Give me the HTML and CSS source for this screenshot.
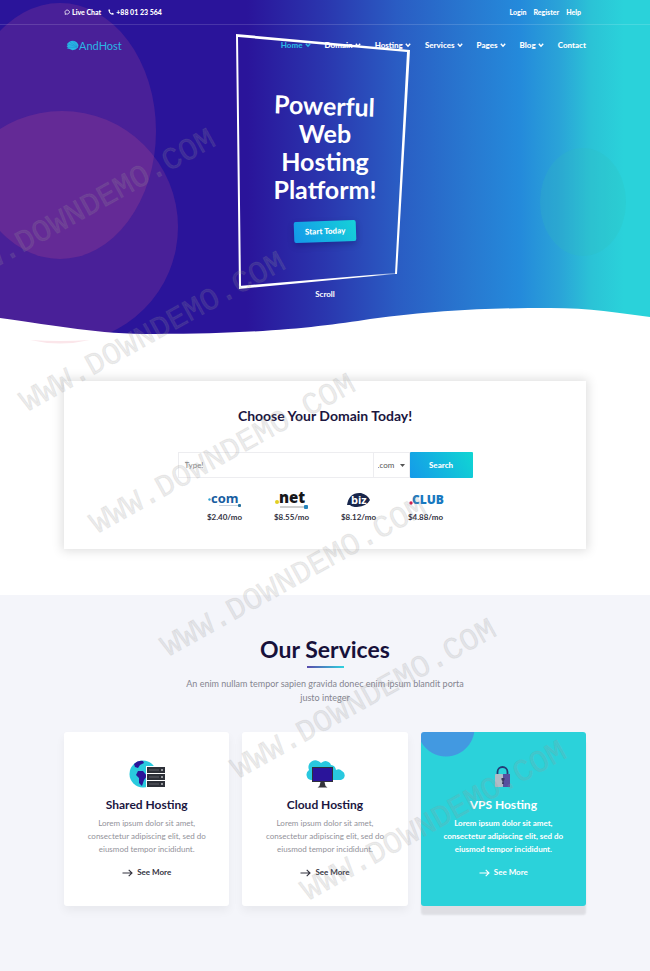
FILE: index.html
```
<!DOCTYPE html>
<html lang="en">
<head>
<meta charset="utf-8">
<meta name="viewport" content="width=device-width, initial-scale=1">
<title>AndHost</title>
<link rel="stylesheet" href="styles.css">
</head>
<body>
<svg class="defs" width="0" height="0" aria-hidden="true">
  <symbol id="arrow" viewBox="0 0 11 8"><path d="M0.5 4h9.5M6.7 0.8 10 4 6.7 7.2" fill="none" stroke="currentColor" stroke-width="1.1"/></symbol>
  <symbol id="chev" viewBox="0 0 6 6"><path d="M0.8 1.7 3 4.1 5.2 1.7" fill="none" stroke="currentColor" stroke-width="1.4"/></symbol>
</svg>

<header class="hero">
  <svg class="shapes" viewBox="0 0 650 350" preserveAspectRatio="none" aria-hidden="true">
    <ellipse cx="60" cy="131" rx="96" ry="128" fill="#ff6490" fill-opacity=".15"/>
    <circle cx="62" cy="227" r="116" fill="#ff6490" fill-opacity=".15"/>
    <ellipse cx="583" cy="202" rx="43" ry="54" fill="#34bdb8" fill-opacity=".2"/>
    <path class="wave" d="M0 318C60 326 95 334 155 334C260 334 320 327 370 319C440 310 490 308 550 308C590 308 620 313 650 317V350H0Z"/>
    <path d="M30 340Q60 342 90 340Q60 347 30 340Z" fill="#fbe6ea"/>
  </svg>

  <div class="topbar">
    <div class="contact">
      <a href="#chat"><svg width="6" height="6" viewBox="0 0 6 6" aria-hidden="true"><path d="M1 5.3 1.4 4.2A2.2 2 0 1 1 2.6 5Z" fill="none" stroke="currentColor" stroke-width=".8"/></svg>Live Chat</a>
      <a href="tel:+880123564"><svg width="6" height="6" viewBox="0 0 6 6" aria-hidden="true"><path d="M.3.7 1.5.2 2.3 1.9 1.6 2.5Q2.3 3.8 3.6 4.4L4.2 3.7 5.8 4.5 5.4 5.8Q1 5.6.3.7Z" fill="currentColor"/></svg>+88 01 23 564</a>
    </div>
    <div class="account"><a href="#login">Login</a><a href="#register">Register</a><a href="#help">Help</a></div>
  </div>

  <div class="navbar">
    <a class="logo" href="#home"><svg width="13" height="11" viewBox="0 0 13 11" aria-hidden="true"><path d="M1 4 3 2 5 1 7 .7 9 1.2 11 2.5 12.5 5 12 7.5 9.5 9.5 6.5 10.2 3.5 9 .7 8.2 2 7.5.5 6 1.8 5.6Z" fill="#29b6e3"/><path d="M2 4 11 7M4 2.2 11 6.8M7 1.2 11.4 6.4M2 7.3 11 7.4" stroke="#1f7fd0" stroke-width=".4" fill="none"/></svg>AndHost</a>
    <nav>
      <a class="active" href="#home">Home<svg><use href="#chev"/></svg></a>
      <a href="#domain">Domain<svg><use href="#chev"/></svg></a>
      <a href="#hosting">Hosting<svg><use href="#chev"/></svg></a>
      <a href="#services">Services<svg><use href="#chev"/></svg></a>
      <a href="#pages">Pages<svg><use href="#chev"/></svg></a>
      <a href="#blog">Blog<svg><use href="#chev"/></svg></a>
      <a href="#contact">Contact</a>
    </nav>
  </div>

  <div class="banner">
    <svg class="frame" viewBox="0 0 176 258" aria-hidden="true">
      <defs><linearGradient id="fade"><stop offset=".85" stop-color="#fff"/><stop offset="1" stop-color="#fff" stop-opacity=".35"/></linearGradient></defs>
      <path d="M1 1 175 17 162 241 160 241 172 19 3 4 6 253 4 256Z" fill="#fff"/>
      <path d="M4 253 160 240 160 241 4 256Z" fill="url(#fade)"/>
    </svg>
    <h1><span class="tilt">Powerful</span><span>Web</span><span>Hosting</span><span>Platform!</span></h1>
    <a class="start" href="#start">Start Today</a>
    <a class="scroll" href="#domain">Scroll</a>
  </div>
</header>

<main>
  <section class="domain" id="domain">
    <h2>Choose Your Domain Today!</h2>
    <form>
      <input type="text" aria-label="Domain name" placeholder="Type!">
      <label class="tld"><select aria-label="Extension"><option>.com</option><option>.net</option></select><svg width="5" height="3" viewBox="0 0 5 3" aria-hidden="true"><path d="M0 0h5L2.500 3Z" fill="#555"/></svg></label>
      <button type="button">Search</button>
    </form>
    <ul class="prices">
      <li><svg viewBox="0 0 36 20" role="img" aria-label=".com"><circle cx="2.500" cy="9.500" r="1.200" fill="#35a3d4"/><text x="4" y="13" class="mark com">com</text><path d="M12 15.500H32" stroke="#b5c5d5" stroke-width=".8"/><rect x="31" y="14" width="3" height="3" rx="1" fill="#26729f"/></svg>$2.40/mo</li>
      <li><svg viewBox="0 0 36 20" role="img" aria-label=".net"><circle cx="3" cy="12" r="2" fill="#e2cf22"/><text x="5" y="13" class="mark net">net</text><path d="M6 17H31" stroke="#777" stroke-width=".7"/><rect x="30" y="15" width="4" height="4" rx="1" fill="#2685bd"/></svg>$8.55/mo</li>
      <li><svg viewBox="0 0 36 20" role="img" aria-label=".biz"><path d="M6 15Q8 2 20 3Q27 5 29 10Q26 16 16 17Q11 17 9 15Z" fill="#18264b"/><text x="10" y="14" class="mark biz">biz</text></svg>$8.12/mo</li>
      <li><svg viewBox="0 0 36 20" role="img" aria-label=".club"><circle cx="3" cy="13" r="1.700" fill="#d1224f"/><text x="4" y="14" class="mark club">CLUB</text></svg>$4.88/mo</li>
    </ul>
  </section>

  <section class="services" id="services">
    <h2>Our Services</h2>
    <p class="lead">An enim nullam tempor sapien gravida donec enim ipsum blandit porta justo integer</p>
    <div class="cards">
      <article>
        <svg class="icon" viewBox="0 0 36 28" aria-hidden="true"><circle cx="14" cy="14" r="13.500" fill="#29cade"/><path d="M5 4Q9 0 14 1L15 3 11 5 9 8 6 7ZM9 11 14 11 18 16 15 20 13 26 10 23 10 18 7 15Z" fill="#2a1599"/><path d="M17 6h19v21H17Z" fill="#fff"/><g fill="#2d3038"><rect x="18" y="7" width="18" height="6"/><rect x="18" y="14" width="18" height="6"/><rect x="18" y="21" width="18" height="6"/></g><path d="M20 10h10M20 17h10M20 24h10" stroke="#757780" stroke-width=".7"/><path d="M32 10h2M32 17h2M32 24h2" stroke="#fff" stroke-width="1.200"/></svg>
        <h3>Shared Hosting</h3>
        <p>Lorem ipsum dolor sit amet, consectetur adipiscing elit, sed do eiusmod tempor incididunt.</p>
        <a href="#shared"><svg><use href="#arrow"/></svg>See More</a>
      </article>
      <article>
        <svg class="icon wide" viewBox="0 0 40 28" aria-hidden="true"><path d="M6 20A5.500 5.500 0 0 1 4 10A7 7 0 0 1 16 3A6 6 0 0 1 26 5A6 6 0 0 1 31 10A5 5 0 0 1 37 11A4.800 4.800 0 0 1 36 20Z" fill="#29c8df"/><rect x="7" y="7" width="21" height="15" fill="#2f303b"/><rect x="8" y="8" width="19" height="13" fill="#2a149a"/><path d="M15.500 22h4l1 4 2 1.500H12.500l2-1.500Z" fill="#34343b"/></svg>
        <h3>Cloud Hosting</h3>
        <p>Lorem ipsum dolor sit amet, consectetur adipiscing elit, sed do eiusmod tempor incididunt.</p>
        <a href="#cloud"><svg><use href="#arrow"/></svg>See More</a>
      </article>
      <article class="featured">
        <svg class="icon" viewBox="0 0 36 28" aria-hidden="true"><path d="M12.500 15V12A5 5 0 0 1 22.500 12V15" fill="none" stroke="#243c75" stroke-width="1.800"/><rect x="10" y="14" width="8" height="13" rx="1" fill="#b1bcc6"/><path d="M18 14h7v13h-7Z" fill="#574f9f"/><path d="M16.500 18h3v2l-1 1 .5 3h-2l.5-3-1-1Z" fill="#39365f"/></svg>
        <h3>VPS Hosting</h3>
        <p>Lorem ipsum dolor sit amet, consectetur adipiscing elit, sed do eiusmod tempor incididunt.</p>
        <a href="#vps"><svg><use href="#arrow"/></svg>See More</a>
      </article>
    </div>
  </section>
</main>

<svg class="watermark" aria-hidden="true">
  <text transform="translate(-43 289) rotate(-29)">WWW.DOWNDEMO.COM</text>
  <text transform="translate(27 412) rotate(-29)">WWW.DOWNDEMO.COM</text>
  <text transform="translate(97 534) rotate(-29)">WWW.DOWNDEMO.COM</text>
  <text transform="translate(168 657) rotate(-29)">WWW.DOWNDEMO.COM</text>
  <text transform="translate(238 779) rotate(-29)">WWW.DOWNDEMO.COM</text>
  <text transform="translate(308 901) rotate(-29)">WWW.DOWNDEMO.COM</text>
</svg>
</body>
</html>
```
FILE: styles.css
```
* { box-sizing: border-box; }

body {
  position: relative;
  margin: 0;
  font-family: Lato, "Liberation Sans", sans-serif;
  font-size: 8px;
  color: #33333f;
  background: #fff;
}

h1, h2, h3, p, ul { margin: 0; padding: 0; }
a { color: inherit; text-decoration: none; }
.defs { position: absolute; }

/* Hero */
.hero {
  position: relative;
  height: 350px;
  color: #fff;
  background: linear-gradient(90deg, #2a149a 0 38%, #2a36ae 50%, #2a5cc3 61%, #2878d0 72%, #248adb 80%, #2aa3d8 86%, #2bc3d6 91%, #2ad2da 96%);
}
.shapes { position: absolute; inset: 0; width: 100%; height: 100%; }
.wave { fill: #fff; }

.topbar {
  position: relative;
  display: flex;
  justify-content: space-between;
  align-items: center;
  height: 25px;
  padding: 0 69px 0 64px;
  border-bottom: 1px solid rgba(255, 255, 255, .14);
  font-size: 7px;
  font-weight: 900;
}
.contact, .account { display: flex; gap: 7px; }
.contact a { display: flex; align-items: center; gap: 2px; }

.navbar {
  position: relative;
  display: flex;
  justify-content: space-between;
  align-items: center;
  height: 40px;
  padding: 0 64px 0 66px;
}
.logo { display: flex; align-items: center; font-size: 11px; color: #2bb6e4; }
nav { display: flex; gap: 14px; font-weight: 900; }
nav a { display: flex; align-items: center; gap: 2px; }
nav svg { width: 6px; height: 6px; }
nav .active { color: #2ab5e2; }

.banner {
  position: relative;
  display: flex;
  flex-direction: column;
  align-items: center;
  padding-top: 26px;
}
.frame {
  position: absolute;
  top: -32px;
  left: 50%;
  width: 176px;
  margin-left: -90px;
}
h1 { position: relative; font-size: 25px; line-height: 28px; text-align: center; }
h1 span { display: block; }
h1 .tilt { transform: rotate(2deg); }
.start {
  position: relative;
  margin-top: 18px;
  padding: 0 11px;
  border-radius: 2px;
  font-weight: 900;
  line-height: 21px;
  background: linear-gradient(60deg, #1397ea, #16d2d8);
  box-shadow: 0 3px 6px rgba(0, 0, 60, .25);
  transform: rotate(-2deg);
}
.scroll { margin-top: 46px; font-weight: 700; line-height: 12px; }

/* Domain search */
.domain {
  margin: 31px 64px 46px;
  height: 168px;
  padding-top: 26px;
  text-align: center;
  background: #fff;
  box-shadow: 0 0 10px 2px rgba(0, 0, 0, .13);
}
.domain h2 { font-size: 14px; line-height: 18px; color: #1b163f; }
form {
  display: flex;
  width: 295px;
  height: 26px;
  margin: 27px auto 0;
}
input, .tld { border: 1px solid #ededf0; background: #fff; }
input {
  flex: 1;
  min-width: 0;
  padding: 0 6px;
  font: 8px Lato, sans-serif;
}
input::placeholder { color: #888; opacity: 1; }
.tld { display: flex; align-items: center; width: 36px; padding: 0 4px; border-left: 0; }
select {
  flex: 1;
  min-width: 0;
  padding: 0;
  border: 0;
  font: 8px Lato, sans-serif;
  color: #555;
  background: none;
  appearance: none;
}
button {
  width: 63px;
  border: 0;
  border-radius: 1px;
  font: 900 8px Lato, sans-serif;
  color: #fff;
  background: linear-gradient(60deg, #159ae9, #10d6d3);
}
.prices {
  display: grid;
  grid-template-columns: repeat(4, 67px);
  justify-content: center;
  margin-top: 12px;
  list-style: none;
  font-weight: 700;
  line-height: 12px;
}
.prices svg { display: block; width: 36px; height: 20px; margin: 0 auto 1px; overflow: visible; }
.mark { font-family: "Open Sans", sans-serif; font-weight: 700; }
.com { font-size: 13px; fill: #175d9f; }
.net { font-size: 15px; font-weight: 800; fill: #17171a; }
.biz { font-size: 11px; fill: #fff; }
.club { font-size: 12px; font-weight: 800; fill: #1878c0; }

/* Services */
.services {
  padding: 40px 64px 65px;
  text-align: center;
  background: #f4f5fa;
}
.services h2 { font-size: 23px; line-height: 28px; color: #17113a; }
.services h2::after {
  content: "";
  display: block;
  width: 37px;
  height: 2px;
  margin: 3px auto 0;
  background: linear-gradient(90deg, #5a4bac, #2fd3df);
}
.lead { max-width: 290px; margin: 9px auto 0; line-height: 14px; color: #858590; font-size: 9px; }
.cards {
  display: grid;
  grid-template-columns: repeat(3, 1fr);
  gap: 13px;
  margin-top: 27px;
}
article {
  height: 174px;
  padding: 28px 16px 0;
  border-radius: 3px;
  background: #fff;
  box-shadow: 0 5px 10px rgba(0, 0, 0, .05);
}
.icon { display: block; width: 36px; height: 28px; margin: 0 auto; }
.wide { width: 40px; }
h3 { margin-top: 9px; font-size: 12px; line-height: 16px; color: #1b163f; }
article p { margin-top: 4px; line-height: 13px; color: #92929a; }
article a {
  display: flex;
  justify-content: center;
  align-items: center;
  gap: 4px;
  margin-top: 10px;
  font-weight: 700;
  line-height: 13px;
}
article a svg { width: 11px; height: 8px; }
.featured {
  color: #fff;
  background: radial-gradient(circle at 25px -4px, #4299e1 0 28px, transparent 29px), #2bd2da;
  box-shadow: 0 9px 2px rgba(0, 0, 0, .09);
}
.featured h3, .featured p { color: #fff; }
.featured p { font-weight: 700; }

.watermark {
  position: absolute;
  inset: 0;
  width: 100%;
  height: 100%;
  overflow: hidden;
  pointer-events: none;
  font-family: "Liberation Mono", monospace;
  font-size: 31px;
  fill: #999;
  fill-opacity: .2;
  stroke: #999;
  stroke-opacity: .12;
}
```
